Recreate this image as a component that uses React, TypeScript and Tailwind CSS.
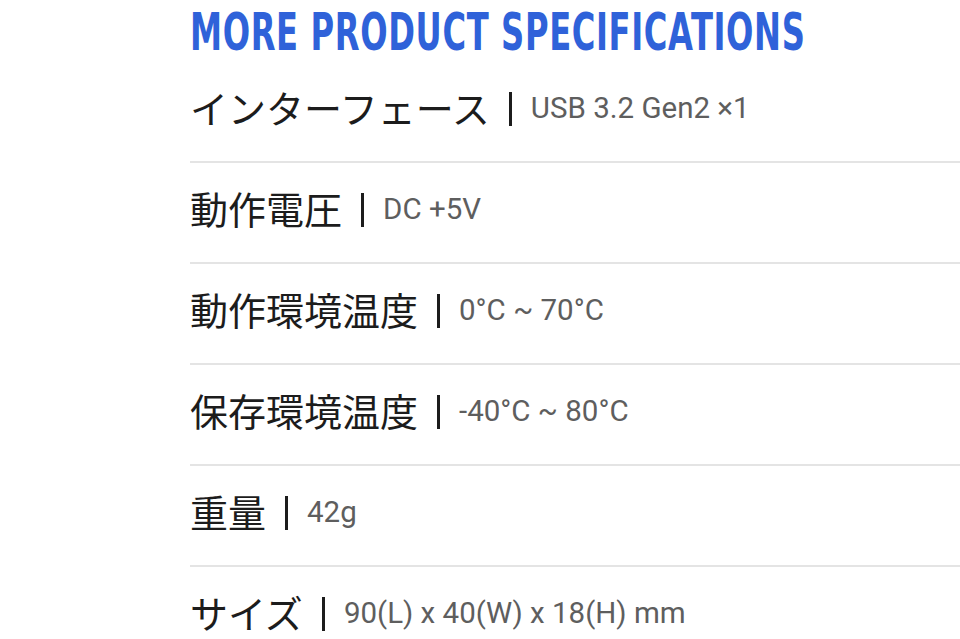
const specs = [
  { label: "インターフェース", value: "USB 3.2 Gen2 ×1" },
  { label: "動作電圧", value: "DC +5V" },
  { label: "動作環境温度", value: "0°C ~ 70°C" },
  { label: "保存環境温度", value: "-40°C ~ 80°C" },
  { label: "重量", value: "42g" },
  { label: "サイズ", value: "90(L) x 40(W) x 18(H) mm" },
];

export default function App() {
  return (
    <div className="w-[960px] h-[639px] overflow-hidden bg-white pl-[190px]">
      <div className="h-[62px] pt-[5px] pb-[6px] flex items-start">
        <h2
          className="inline-block origin-top-left scale-x-[0.895] scale-y-[1.31] whitespace-nowrap text-[40px] leading-[40px] font-bold text-[#2f62d9] tracking-[0.7px]"
          style={{ fontFamily: '"DejaVu Sans Condensed", "DejaVu Sans", sans-serif' }}
        >
          MORE PRODUCT SPECIFICATIONS
        </h2>
      </div>
      <ul>
        {specs.map((s) => (
          <li
            key={s.label}
            className="h-[101px] pb-[6px] border-b-2 border-[#e4e4e4] flex items-center"
          >
            <span
              className="text-[38px] leading-none text-[#1c1c1c] whitespace-nowrap -mt-[3px]"
              style={{ fontFamily: '"Noto Sans CJK JP", sans-serif' }}
            >
              {s.label}
            </span>
            <span className="ml-[19px] mr-[19px] w-[3px] h-[34px] bg-[#1c1c1c]"></span>
            <span
              className="text-[29.5px] leading-none text-[#5e5e5e] whitespace-nowrap"
              style={{ fontFamily: 'Roboto, "Liberation Sans", sans-serif' }}
            >
              {s.value}
            </span>
          </li>
        ))}
      </ul>
    </div>
  );
}
